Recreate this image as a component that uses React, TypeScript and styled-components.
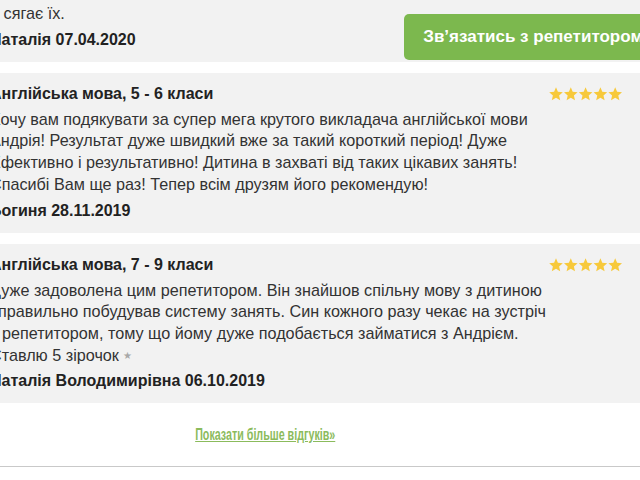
import React from 'react';
import styled, { createGlobalStyle } from 'styled-components';

const GlobalStyle = createGlobalStyle`
  html, body {
    margin: 0;
    padding: 0;
    background: #ffffff;
    overflow: hidden;
  }
  body {
    font-family: "Liberation Sans", Arial, sans-serif;
    color: #333;
  }
`;

const Section = styled.div`
  width: 700px;
  margin-left: -30px;
  margin-top: -1px;
  padding-bottom: 21px;
  border-bottom: 1px solid #c9c9c9;
  box-shadow: 0 1px 0 #ececec;
`;

const Card = styled.div<{ $padRight?: number }>`
  background: #f2f2f2;
  padding: 10px ${(p) => p.$padRight ?? 47}px 11px 20px;
  margin-bottom: 11px;
`;

const TopCard = styled(Card)`
  display: flex;
  justify-content: space-between;
  align-items: flex-end;
  padding-top: 0;
`;

const CardHead = styled.div`
  display: flex;
  justify-content: space-between;
  align-items: center;
`;

const Title = styled.div`
  font-size: 16px;
  font-weight: bold;
  line-height: 22px;
  color: #222;
`;

const Body = styled.p`
  margin: 4px 0 0;
  font-size: 16.2px;
  line-height: 21.7px;
  color: #333;
`;

const Author = styled.div`
  margin-top: 4px;
  font-size: 16px;
  font-weight: bold;
  line-height: 22px;
  color: #222;
`;

const SmallStar = styled.span`
  font-size: 10px;
  color: #a8a8a8;
  margin-left: 4px;
  vertical-align: 2px;
`;

const ContactButton = styled.button`
  background: #7cb84e;
  color: #fff;
  border: none;
  border-radius: 5px;
  height: 46px;
  padding: 0 19px;
  font-family: "Liberation Sans", Arial, sans-serif;
  font-size: 17px;
  font-weight: bold;
  white-space: nowrap;
  margin-bottom: -9px;
  cursor: pointer;
`;

const MoreRow = styled.div`
  text-align: center;
  padding: 11px 110px 0 0;
  line-height: 20px;
`;

const MoreLink = styled.a`
  display: inline-block;
  font-family: "Liberation Sans", Arial, sans-serif;
  font-size: 17px;
  font-weight: bold;
  color: #8bbb5c;
  text-decoration: underline;
  transform: scaleX(0.63);
  cursor: pointer;
`;

const Stars = () => (
  <svg width="74" height="14" viewBox="0 0 74 14">
    {[0, 1, 2, 3, 4].map((i) => (
      <polygon
        key={i}
        transform={`translate(${i * 14.8}, 0)`}
        points="7,0.3 8.9,4.8 13.8,5.2 10.1,8.4 11.2,13.3 7,10.7 2.8,13.3 3.9,8.4 0.2,5.2 5.1,4.8"
        fill="#f7c93b"
      />
    ))}
  </svg>
);

const reviews = [
  {
    title: 'Англійська мова, 5 - 6 класи',
    lines: [
      'Хочу вам подякувати за супер мега крутого викладача англійської мови',
      'Андрія! Результат дуже швидкий вже за такий короткий період! Дуже',
      'Ефективно і результативно! Дитина в захваті від таких цікавих занять!',
      'Спасибі Вам ще раз! Тепер всім друзям його рекомендую!',
    ],
    star: false,
    author: 'Богиня 28.11.2019',
  },
  {
    title: 'Англійська мова, 7 - 9 класи',
    lines: [
      'Дуже задоволена цим репетитором. Він знайшов спільну мову з дитиною',
      'і правильно побудував систему занять. Син кожного разу чекає на зустріч',
      'з репетитором, тому що йому дуже подобається займатися з Андрієм.',
      'Ставлю 5 зірочок',
    ],
    star: true,
    author: 'Наталія Володимирівна 06.10.2019',
  },
];

export default function App() {
  return (
    <>
      <GlobalStyle />
      <Section>
        <TopCard $padRight={8}>
          <div>
            <Body>й сягає їх.</Body>
            <Author>Наталія 07.04.2020</Author>
          </div>
          <ContactButton>Зв’язатись з репетитором</ContactButton>
        </TopCard>
        {reviews.map((r) => (
          <Card key={r.author}>
            <CardHead>
              <Title>{r.title}</Title>
              <Stars />
            </CardHead>
            <Body>
              {r.lines.map((l, i) => (
                <React.Fragment key={i}>
                  {l}
                  {i === r.lines.length - 1 && r.star && <SmallStar>★</SmallStar>}
                  {i < r.lines.length - 1 && <br />}
                </React.Fragment>
              ))}
            </Body>
            <Author>{r.author}</Author>
          </Card>
        ))}
        <MoreRow>
          <MoreLink>Показати більше відгуків»</MoreLink>
        </MoreRow>
      </Section>
    </>
  );
}
